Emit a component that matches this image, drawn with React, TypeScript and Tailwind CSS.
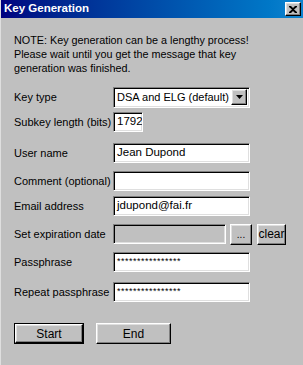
const sunken =
  'border border-t-[#808080] border-l-[#808080] border-r-white border-b-white shadow-[inset_1px_1px_0_#000,inset_-1px_-1px_0_#dfdfdf]';
const raised =
  'border border-t-white border-l-white border-r-black border-b-black shadow-[inset_-1px_-1px_0_#808080,inset_1px_1px_0_#dfdfdf] bg-[#c0c0c0]';

function Row({ label, mt, children }: { label: string; mt: string; children: React.ReactNode }) {
  return (
    <div className={`flex items-center h-[20px] ${mt}`}>
      <span className="w-[99px] shrink-0 whitespace-nowrap">{label}</span>
      {children}
    </div>
  );
}

function TextBox({ value, w = 'w-[137px]', small = false }: { value?: string; w?: string; small?: boolean }) {
  return (
    <div className={`${sunken} ${w} h-[20px] bg-white flex items-center pl-[3px] overflow-hidden whitespace-nowrap`}>
      <span className={small ? 'text-[9px] tracking-[0.5px]' : 'text-[11.5px]'}>{value}</span>
    </div>
  );
}

export default function App() {
  return (
    <div className="w-[303px] h-[365px] bg-[#c0c0c0] font-['Liberation_Sans',Arial,sans-serif] text-[11px] text-black flex flex-col border-l border-[#dfdfdf] overflow-hidden">
      <div className="h-[18px] shrink-0 flex items-center justify-between pl-[3px] pr-[2px] bg-gradient-to-r from-[#000080] to-[#1084d0]">
        <span className="text-white font-bold text-[11.5px]">Key Generation</span>
        <div className={`${raised} w-[16px] h-[14px] flex items-center justify-center`}>
          <svg width="8" height="7" viewBox="0 0 8 7">
            <path d="M0 0h2l2 2 2-2h2v1L5 3.5 8 6v1H6L4 5 2 7H0V6l3-2.5L0 1z" fill="#000" />
          </svg>
        </div>
      </div>

      <div className="pl-[13px] pt-[15px]">
        <p className="leading-[14px] text-[10.8px]">
          NOTE: Key generation can be a lengthy process!
          <br />
          Please wait until you get the message that key
          <br />
          generation was finished.
        </p>

        <div className="flex flex-col mt-[12px]">
          <Row label="Key type" mt="">
            <div className={`${sunken} w-[137px] h-[21px] bg-white flex items-center justify-between pl-[3px] pr-[2px] whitespace-nowrap`}>
              <span className="text-[11px]">DSA and ELG (default)</span>
              <div className={`${raised} w-[16px] h-[16px] shrink-0 flex items-center justify-center`}>
                <svg width="7" height="4" viewBox="0 0 7 4">
                  <path d="M0 0h7L3.5 4z" fill="#000" />
                </svg>
              </div>
            </div>
          </Row>
          <Row label="Subkey length (bits)" mt="mt-[5px]">
            <TextBox value="1792" w="w-[30px]" />
          </Row>
          <Row label="User name" mt="mt-[11px]">
            <TextBox value="Jean Dupond" />
          </Row>
          <Row label="Comment (optional)" mt="mt-[8px]">
            <TextBox />
          </Row>
          <Row label="Email address" mt="mt-[5px]">
            <TextBox value="jdupond@fai.fr" />
          </Row>
          <Row label="Set expiration date" mt="mt-[8px]">
            <div className={`${sunken} w-[113px] h-[20px] bg-[#c0c0c0]`} />
            <button className={`${raised} ml-[4px] w-[22px] h-[21px] flex items-end justify-center pb-[4px] text-[10px] leading-none`}>
              ...
            </button>
            <button className={`${raised} ml-[5px] w-[29px] h-[21px] text-[12px] leading-none`}>clear</button>
          </Row>
          <Row label="Passphrase" mt="mt-[8px]">
            <TextBox value="****************" small />
          </Row>
          <Row label="Repeat passphrase" mt="mt-[10px]">
            <TextBox value="****************" small />
          </Row>
        </div>

        <div className="flex mt-[21px] gap-[12px]">
          <div className="border border-black">
            <button className={`${raised} w-[68px] h-[19px] text-[12px] leading-none`}>Start</button>
          </div>
          <button className={`${raised} w-[75px] h-[21px] text-[12px] leading-none`}>End</button>
        </div>
      </div>
    </div>
  );
}
